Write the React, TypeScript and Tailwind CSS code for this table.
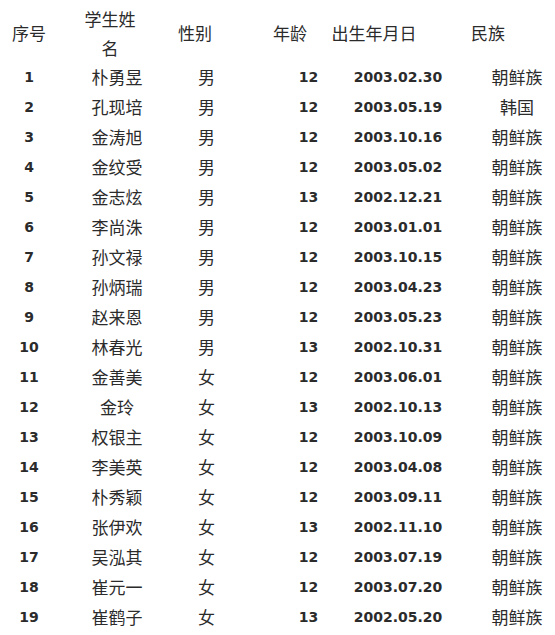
const rows: [string, string, string, string, string, string][] = [
  ["1", "朴勇昱", "男", "12", "2003.02.30", "朝鲜族"],
  ["2", "孔现培", "男", "12", "2003.05.19", "韩国"],
  ["3", "金涛旭", "男", "12", "2003.10.16", "朝鲜族"],
  ["4", "金纹受", "男", "12", "2003.05.02", "朝鲜族"],
  ["5", "金志炫", "男", "13", "2002.12.21", "朝鲜族"],
  ["6", "李尚洙", "男", "12", "2003.01.01", "朝鲜族"],
  ["7", "孙文禄", "男", "12", "2003.10.15", "朝鲜族"],
  ["8", "孙炳瑞", "男", "12", "2003.04.23", "朝鲜族"],
  ["9", "赵来恩", "男", "12", "2003.05.23", "朝鲜族"],
  ["10", "林春光", "男", "13", "2002.10.31", "朝鲜族"],
  ["11", "金善美", "女", "12", "2003.06.01", "朝鲜族"],
  ["12", "金玲", "女", "13", "2002.10.13", "朝鲜族"],
  ["13", "权银主", "女", "12", "2003.10.09", "朝鲜族"],
  ["14", "李美英", "女", "12", "2003.04.08", "朝鲜族"],
  ["15", "朴秀颖", "女", "12", "2003.09.11", "朝鲜族"],
  ["16", "张伊欢", "女", "13", "2002.11.10", "朝鲜族"],
  ["17", "吴泓其", "女", "12", "2003.07.19", "朝鲜族"],
  ["18", "崔元一", "女", "12", "2003.07.20", "朝鲜族"],
  ["19", "崔鹤子", "女", "13", "2002.05.20", "朝鲜族"],
];

const cjk = "font-['Noto_Sans_CJK_SC',sans-serif] text-[17px]";
const num = "font-['DejaVu_Sans',sans-serif] font-bold text-[14px]";

export default function App() {
  return (
    <div className="w-[555px] h-[635px] bg-white text-[#2b2b2b]">
      {/* header */}
      <div className={`flex h-[62px] items-center pt-[3px] leading-[29px] text-center ${cjk}`}>
        <div className="w-[58px]">序号</div>
        <div className="ml-[22px] w-[60px]">学生姓名</div>
        <div className="ml-[25px] w-[60px]">性别</div>
        <div className="ml-[35px] w-[60px]">年龄</div>
        <div className="ml-[4px] w-[100px]">出生年月日</div>
        <div className="ml-[34px] w-[60px]">民族</div>
      </div>
      {rows.map((r) => (
        <div key={r[0]} className="flex h-[30px] items-center text-center">
          <div className={`w-[58px] ${num}`}>{r[0]}</div>
          <div className={`w-[118px] ${cjk}`}>{r[1]}</div>
          <div className={`w-[61px] ${cjk}`}>{r[2]}</div>
          <div className={`ml-[33px] w-[77px] ${num}`}>{r[3]}</div>
          <div className={`w-[102px] ${num}`}>{r[4]}</div>
          <div className={`ml-[30px] w-[76px] ${cjk}`}>{r[5]}</div>
        </div>
      ))}
    </div>
  );
}
